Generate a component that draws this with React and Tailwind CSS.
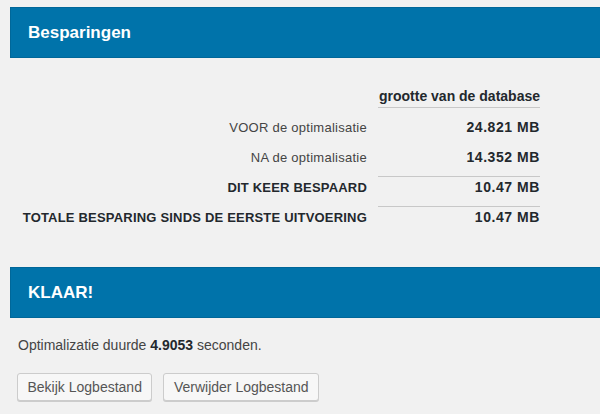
const ROWS = [
  { label: 'VOOR de optimalisatie', value: '24.821 MB', strong: false, line: false },
  { label: 'NA de optimalisatie', value: '14.352 MB', strong: false, line: false },
  { label: 'DIT KEER BESPAARD', value: '10.47 MB', strong: true, line: true },
  { label: 'TOTALE BESPARING SINDS DE EERSTE UITVOERING', value: '10.47 MB', strong: true, line: true },
]

function Bar({ title }) {
  return (
    <div className="ml-[10px] h-[51px] flex items-center pl-[17px] bg-[#0073aa] border border-[#006799] border-r-0">
      <h2 className="text-[17px] font-bold text-white">{title}</h2>
    </div>
  )
}

export default function App() {
  return (
    <div
      className="w-[600px] h-[414px] overflow-hidden bg-[#f1f1f1] text-[#23282d] pt-[7px]"
      style={{ fontFamily: '"Liberation Sans", Arial, sans-serif' }}
    >
      <Bar title="Besparingen" />

      {/* Savings table */}
      <div className="mt-[30px] grid grid-cols-[1fr_162px] gap-x-[11px] pr-[60px]">
        <div className="mb-[8px]" />
        <div className="mb-[8px] text-right font-bold text-[14px] leading-[17px] pb-[2px] border-b border-[#c8c8c8]">
          grootte van de database
        </div>
        {ROWS.map((r) => (
          <div key={r.label} className="contents">
            <div
              className={`text-right h-[30px] pt-[3px] leading-[17px] text-[13px] ${
                r.strong ? 'font-bold tracking-[0.015em] text-[#23282d]' : 'tracking-[0.02em] text-[#444]'
              }`}
            >
              {r.label}
            </div>
            <div
              className={`text-right font-bold h-[30px] pt-[2px] leading-[17px] text-[14px] tracking-[0.04em] border-t ${
                r.line ? 'border-[#c8c8c8]' : 'border-transparent'
              }`}
            >
              {r.value}
            </div>
          </div>
        ))}
      </div>

      <div className="mt-[31px]">
        <Bar title="KLAAR!" />
      </div>

      <p className="mt-[17px] ml-[18px] text-[14px] leading-[21px] text-[#444]">
        Optimalizatie duurde <b className="text-[#23282d]">4.9053</b> seconden.
      </p>

      <div className="mt-[17px] ml-[17px] flex gap-[11px]">
        {['Bekijk Logbestand', 'Verwijder Logbestand'].map((t) => (
          <button
            key={t}
            className="h-[28px] px-[9.5px] text-[14px] text-[#555] bg-[#f7f7f7] border border-[#cccccc] rounded-[3px] shadow-[0_1px_0_#cccccc]"
          >
            {t}
          </button>
        ))}
      </div>
    </div>
  )
}
